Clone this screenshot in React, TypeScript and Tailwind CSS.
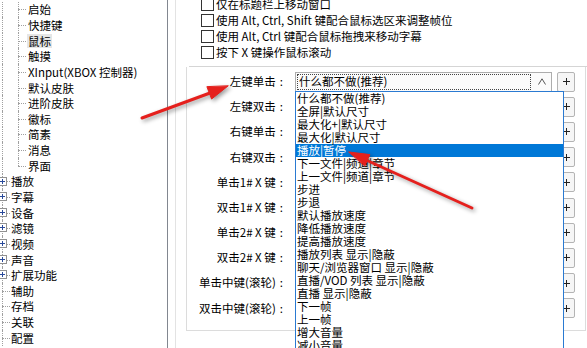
import React from "react";

const subItems = ["启始", "快捷键", "鼠标", "触摸", "XInput(XBOX 控制器)", "默认皮肤", "进阶皮肤", "徽标", "简素", "消息", "界面"];

const topItems: [string, boolean][] = [
  ["播放", true],
  ["字幕", true],
  ["设备", true],
  ["滤镜", true],
  ["视频", true],
  ["声音", true],
  ["扩展功能", true],
  ["辅助", false],
  ["存档", false],
  ["关联", false],
  ["配置", false],
];

const checks = [
  "仅在标题栏上移动窗口",
  "使用 Alt, Ctrl, Shift 键配合鼠标选区来调整帧位",
  "使用 Alt, Ctrl 键配合鼠标拖拽来移动字幕",
  "按下 X 键操作鼠标滚动",
];

const labels = ["左键单击", "左键双击", "右键单击", "右键双击", "单击1# X 键", "双击1# X 键", "单击2# X 键", "双击2# X 键", "单击中键(滚轮)", "双击中键(滚轮)"];

const options = [
  "什么都不做(推荐)",
  "全屏|默认尺寸",
  "最大化+|默认尺寸",
  "最大化|默认尺寸",
  "播放|暂停",
  "下一文件|频道|章节",
  "上一文件|频道|章节",
  "步进",
  "步退",
  "默认播放速度",
  "降低播放速度",
  "提高播放速度",
  "播放列表 显示|隐蔽",
  "聊天/浏览器窗口 显示|隐蔽",
  "直播/VOD 列表 显示|隐蔽",
  "直播 显示|隐蔽",
  "下一帧",
  "上一帧",
  "增大音量",
  "减小音量",
];

// 树形控件的虚线连接（竖线 + 横线）
function Elbow({ last, plus }: { last?: boolean; plus?: boolean }) {
  return (
    <div className="relative w-[8px] self-stretch">
      <div className={`absolute left-0 top-0 border-l border-dotted border-[#a0a0a0] ${last ? "h-1/2" : "h-full"}`} />
      <div className="absolute left-0 top-1/2 w-full border-t border-dotted border-[#a0a0a0]" />
      {plus && (
        <div className="absolute left-[-4px] top-[3px] flex h-[9px] w-[9px] items-center justify-center border border-[#919191] bg-white">
          <svg width="5" height="5" viewBox="0 0 5 5">
            <path d="M0 2.5h5M2.5 0v5" stroke="#2a4a9a" strokeWidth="1" />
          </svg>
        </div>
      )}
    </div>
  );
}

function Tree() {
  return (
    <div className="w-[168px] shrink-0 overflow-hidden border-r border-[#828790] pt-[1.5px]">
      {subItems.map((t, i) => (
        <div key={t} className="flex h-[15.65px] items-center">
          <div className="ml-[2px] w-[16px] self-stretch border-l border-dotted border-[#a0a0a0]" />
          <Elbow last={i === subItems.length - 1} />
          <span className={`ml-[1px] whitespace-nowrap px-[1px] leading-[14px] ${t === "鼠标" ? "bg-[#e6e6e6]" : ""}`}>{t}</span>
        </div>
      ))}
      {topItems.map(([t, plus]) => (
        <div key={t} className="flex h-[15.65px] items-center pl-[2px]">
          <Elbow plus={plus} />
          <span className="ml-[1px] whitespace-nowrap leading-[14px]">{t}</span>
        </div>
      ))}
    </div>
  );
}

function PlusButton() {
  return (
    <div className="flex h-[20px] w-[18px] shrink-0 items-center justify-center rounded-[2px] border border-[#b4b4b4] bg-[#f6f6f6]">
      <svg width="7" height="7" viewBox="0 0 7 7">
        <path d="M0 3.5h7M3.5 0v7" stroke="#222" strokeWidth="1" />
      </svg>
    </div>
  );
}

function Combo() {
  return (
    <div className="flex h-[20px] w-[257px] items-stretch border border-[#adadad] bg-[#fbfbfb]">
      <div className="m-[1px] flex flex-1 items-center border border-dotted border-[#444] pl-[1px] leading-none">什么都不做(推荐)</div>
      <div className="flex w-[19px] items-center justify-center">
        <svg width="8" height="7" viewBox="0 0 8 7">
          <path d="M0.5 6.5L4 0.8L7.5 6.5" fill="none" stroke="#555" strokeWidth="1" />
        </svg>
      </div>
    </div>
  );
}

function Arrows() {
  return (
    <svg
      className="pointer-events-none absolute left-0 top-0 drop-shadow-[2px_2px_2px_rgba(0,0,0,0.4)]"
      width="587"
      height="348"
      viewBox="0 0 587 348"
    >
      <g fill="#e5201d" stroke="#e5201d" strokeLinecap="round">
        <line x1="142" y1="118" x2="210" y2="93" strokeWidth="3" />
        <polygon points="228,86 211.6,99 207,87" strokeWidth="1" strokeLinejoin="round" />
        <line x1="472" y1="208" x2="366" y2="160" strokeWidth="3" />
        <polygon points="349,152 369.9,154.6 364.9,165.8" strokeWidth="1" strokeLinejoin="round" />
      </g>
    </svg>
  );
}

export default function App() {
  return (
    <div className="relative flex h-[348px] w-[587px] overflow-hidden bg-white font-['Noto_Sans_CJK_SC',sans-serif] text-[11.5px] text-black">
      <Tree />
      <div className="ml-[7px] flex flex-1 flex-col border-l border-[#e3e3e3]">
        <div className="mt-[-3.5px] flex flex-col pl-[25px]">
          {checks.map((c) => (
            <div key={c} className="flex h-[16px] items-center">
              <div className="h-[13px] w-[13px] shrink-0 border border-[#333] bg-white" />
              <span className="ml-[2px] whitespace-nowrap">{c}</span>
            </div>
          ))}
        </div>
        <div className="ml-[13px] mt-[5.5px] h-px bg-[#d5d5d5]" />
        <div className="ml-[10px] mr-[1px] flex flex-col border-b border-l border-r border-[#dcdcdc] pb-[9px] pt-[2px]">
          {labels.map((l) => (
            <div key={l} className="flex h-[25.2px] items-center">
              <div className="w-[96px] whitespace-nowrap text-right">
                {l}
                <span className="ml-[4px]">:</span>
              </div>
              <div className="ml-[12px]">
                <Combo />
              </div>
              <div className="ml-[5px]">
                <PlusButton />
              </div>
            </div>
          ))}
        </div>
      </div>

      <div className="absolute bottom-[-4px] left-[295px] top-[91px] w-[269px] border border-[#2a7ad2] bg-white">
        {options.map((o) => (
          <div
            key={o}
            className={`h-[13px] whitespace-nowrap pl-[1px] leading-[13px] ${o === "播放|暂停" ? "bg-[#0078d7] text-white" : ""}`}
          >
            {o}
          </div>
        ))}
      </div>

      <Arrows />
    </div>
  );
}
